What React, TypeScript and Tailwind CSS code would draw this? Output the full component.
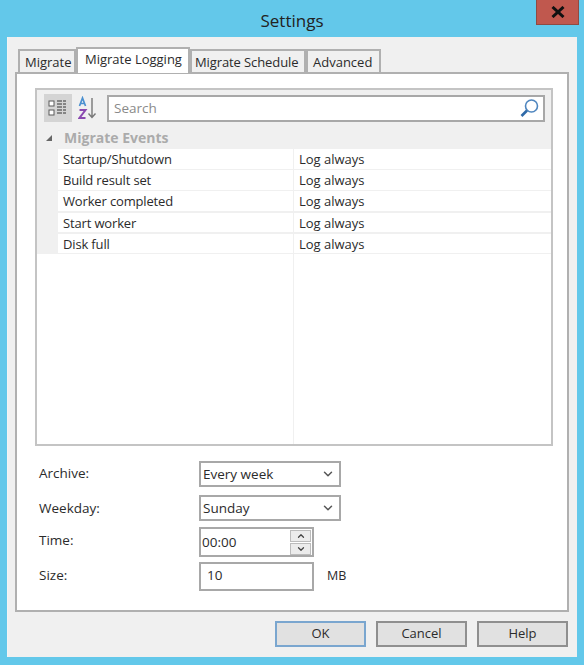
import React from "react";
import { ChevronDown, ChevronUp } from "lucide-react";

const rows = ["Startup/Shutdown", "Build result set", "Worker completed", "Start worker", "Disk full"];

function Tab({ label, active, className }: { label: string; active?: boolean; className: string }) {
  if (active) {
    return (
      <div className={`relative z-10 -mb-px h-[26px] whitespace-nowrap border-2 border-b-0 border-[#b0b0b0] bg-white text-[13px] leading-[20px] text-[#2b2b2b] ${className}`}>
        {label}
      </div>
    );
  }
  return (
    <div className={`h-[23px] whitespace-nowrap border-2 border-b-0 border-[#b0b0b0] bg-[#f0f0f0] pt-[1px] text-[13px] leading-[21px] text-[#2b2b2b] ${className}`}>
      {label}
    </div>
  );
}

function Combo({ value }: { value: string }) {
  return (
    <div className="flex h-[26px] w-[142px] items-center justify-between border-2 border-[#a8a8a8] bg-white pl-[2px] pr-[4px] text-[#2b2b2b]">
      <span>{value}</span>
      <ChevronDown size={14} strokeWidth={2.5} className="text-[#555]" />
    </div>
  );
}

export default function App() {
  return (
    <div className="flex h-[665px] w-[584px] flex-col overflow-hidden bg-[#63c8ea] font-['Open_Sans','Liberation_Sans',sans-serif]">
      <div className="relative h-[37px] shrink-0">
        <div className="pt-[10px] text-center text-[17px] leading-[22px] text-[#222]">Settings</div>
        <div className="absolute right-[5px] top-0 flex h-[25px] w-[43px] items-center justify-center border border-[#8f4a42] border-t-0 bg-[#c0584e]">
          <svg width="14" height="12" viewBox="0 0 14 12">
            <path d="M1.5 1 L12.5 11 M12.5 1 L1.5 11" stroke="#111" strokeWidth="3" />
          </svg>
        </div>
      </div>

      <div className="mx-[7px] flex h-[620px] flex-col border-l-[1px] border-[#f4f4f4] bg-[#f0f0f0] px-[7px] pt-[12px]">
        <div className="ml-[3px] flex h-[23px] items-end">
          <Tab label="Migrate" className="w-[58px] pl-[5px]" />
          <Tab label="Migrate Logging" active className="w-[114px] pl-[7px]" />
          <Tab label="Migrate Schedule" className="w-[116px] pl-[3px] tracking-[-0.1px]" />
          <Tab label="Advanced" className="w-[75px] pl-[5px]" />
        </div>

        <div className="flex h-[540px] w-[554px] flex-col border-2 border-[#b0b0b0] bg-white px-[18px] pt-[14px]">
          <div className="flex h-[358px] w-[518px] flex-col border-2 border-[#c4c4c4] bg-white">
            <div className="flex h-[36px] shrink-0 items-center bg-[#f0f0f0] pl-[7px] pr-[6px]">
              <div className="flex h-[28px] w-[28px] items-center justify-center bg-[#d4d4d4]">
                <svg width="20" height="18" viewBox="0 0 20 18" fill="none">
                  <rect x="1" y="2" width="5" height="5" fill="#fff" stroke="#5a5a5a" />
                  <rect x="1" y="11" width="5" height="5" fill="#fff" stroke="#5a5a5a" />
                  <path d="M9 2h9M9 5h9M9 8h9M9 11h9M9 14h9" stroke="#6a6a6a" strokeWidth="1.4" strokeDasharray="5 1" />
                </svg>
              </div>
              <div className="ml-[6px] flex w-[22px] items-center">
                <svg width="20" height="24" viewBox="0 0 20 24" fill="none">
                  <path d="M1.5 10 L4.5 2 L7.5 10 M2.6 7.5 H6.4" stroke="#4a90d0" strokeWidth="1.7" />
                  <path d="M1.5 14 H7.5 L1.5 22 H7.5" stroke="#8a4ab0" strokeWidth="2" />
                  <path d="M14 2 V21 M10.5 17.5 L14 21.5 L17.5 17.5" stroke="#777" strokeWidth="1.4" />
                </svg>
              </div>
              <div className="ml-[7px] flex h-[27px] flex-1 items-center justify-between border-2 border-[#a8a8a8] bg-white pl-[5px] pr-[3px] text-[13.5px] text-[#8a8a8a]">
                <span>Search</span>
                <svg width="21" height="21" viewBox="0 0 21 21" fill="none">
                  <circle cx="12.5" cy="8" r="6" stroke="#4f86bf" strokeWidth="1.6" />
                  <path d="M8 12.5 L2.5 18" stroke="#2f6aa8" strokeWidth="2.6" />
                </svg>
              </div>
            </div>

            <div className="flex h-[23px] shrink-0 items-center bg-[#f0f0f0]">
              <svg width="8" height="8" viewBox="0 0 8 8" className="ml-[8px]">
                <path d="M7 1 V7 H1 Z" fill="#666" />
              </svg>
              <span className="ml-[11px] text-[14px] font-bold text-[#ababab]">Migrate Events</span>
            </div>

            <div className="flex flex-1 flex-col bg-white">
              {rows.map((name, i) => (
                <div key={name} className={i >= 3 ? "flex h-[21px] shrink-0 bg-[#f0f0f0] pt-[1px]" : "flex h-[21px] shrink-0 bg-[#f0f0f0]"}>
                  <div className="ml-[21px] w-[235px] border-b border-[#f0f0f0] bg-white pl-[5px] text-[13px] leading-[20px] tracking-[-0.15px] text-[#2b2b2b]">
                    {name}
                  </div>
                  <div className="flex-1 border-b border-l border-[#f0f0f0] bg-white pl-[5px] text-[13px] leading-[20px] text-[#2b2b2b]">
                    Log always
                  </div>
                </div>
              ))}
              <div className="flex flex-1">
                <div className="w-[256px]" />
                <div className="flex-1 border-l border-[#f0f0f0]" />
              </div>
            </div>
          </div>

          <div className="mt-[15px] flex flex-col text-[13.5px] text-[#2b2b2b]">
            <div className="flex h-[26px] items-center">
              <span className="w-[164px] pb-[2px] pl-[4px]">Archive:</span>
              <Combo value="Every week" />
            </div>
            <div className="mt-[8px] flex h-[26px] items-center">
              <span className="w-[164px] pl-[4px]">Weekday:</span>
              <Combo value="Sunday" />
            </div>
            <div className="mt-[6px] flex h-[30px] items-center">
              <span className="w-[164px] pb-[4px] pl-[4px]">Time:</span>
              <div className="flex h-[30px] w-[115px] items-center justify-between border-2 border-[#a8a8a8] bg-white pr-[1px]">
                <span className="pl-[1px]">00:00</span>
                <div className="flex flex-col gap-[1px]">
                  <div className="flex h-[12px] w-[21px] items-center justify-center border border-[#bcbcbc] bg-[#ececec]">
                    <ChevronUp size={10} strokeWidth={3} className="text-[#444]" />
                  </div>
                  <div className="flex h-[12px] w-[21px] items-center justify-center border border-[#bcbcbc] bg-[#ececec]">
                    <ChevronDown size={10} strokeWidth={3} className="text-[#444]" />
                  </div>
                </div>
              </div>
            </div>
            <div className="mt-[5px] flex h-[29px] items-center">
              <span className="w-[164px] pb-[2px] pl-[4px]">Size:</span>
              <div className="flex h-[29px] w-[115px] items-center border-2 border-[#a8a8a8] bg-white pb-[2px] pl-[6px]">10</div>
              <span className="ml-[13px] pb-[1px] text-[12.5px]">MB</span>
            </div>
          </div>
        </div>

        <div className="mt-[9px] flex justify-end gap-[10px] pr-[2px] text-[13px] text-[#2b2b2b]">
          <button className="h-[26px] w-[91px] border-2 border-[#7aa6cf] bg-[#e1e1e1]">OK</button>
          <button className="h-[26px] w-[91px] border-2 border-[#8f8f8f] bg-[#e1e1e1]">Cancel</button>
          <button className="h-[26px] w-[91px] border-2 border-[#8f8f8f] bg-[#e1e1e1]">Help</button>
        </div>
      </div>
    </div>
  );
}
